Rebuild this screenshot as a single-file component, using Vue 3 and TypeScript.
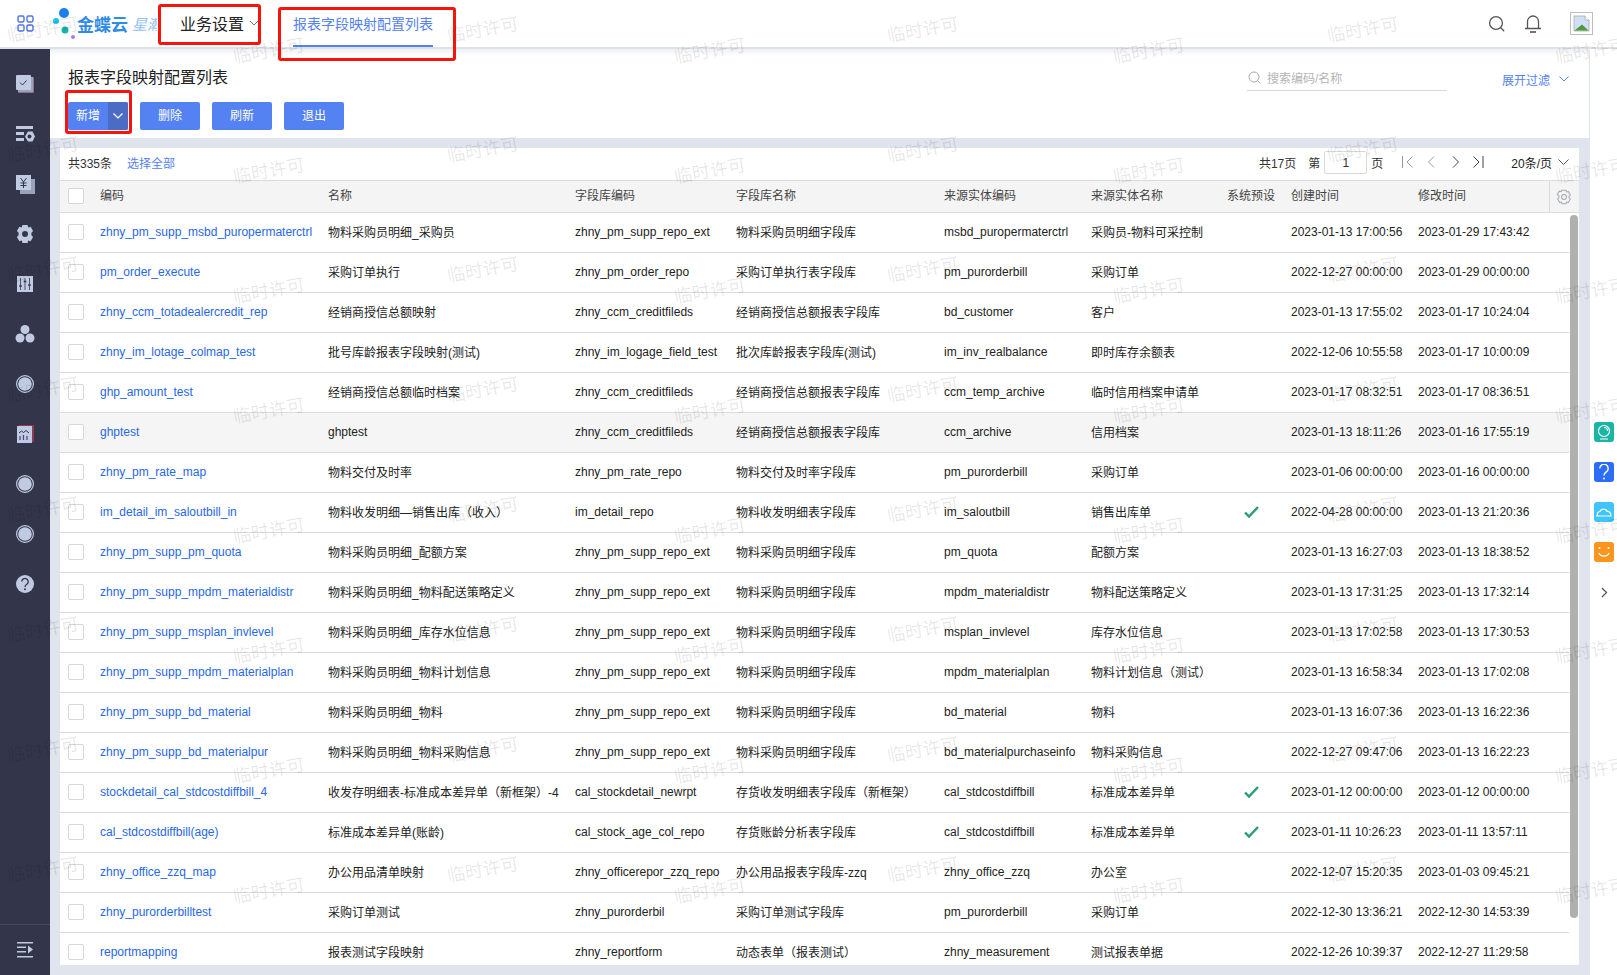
<script setup lang="ts">
interface Row {
  code: string
  name: string
  repo: string
  repoName: string
  entity: string
  entityName: string
  sys?: boolean
  created: string
  modified: string
}

const sup = 'zhny_pm_supp_repo_ext'
const supN = '物料采购员明细字段库'
const rows: Row[] = [
  { code: 'zhny_pm_supp_msbd_puropermaterctrl', name: '物料采购员明细_采购员', repo: sup, repoName: supN, entity: 'msbd_puropermaterctrl', entityName: '采购员-物料可采控制', created: '2023-01-13 17:00:56', modified: '2023-01-29 17:43:42' },
  { code: 'pm_order_execute', name: '采购订单执行', repo: 'zhny_pm_order_repo', repoName: '采购订单执行表字段库', entity: 'pm_purorderbill', entityName: '采购订单', created: '2022-12-27 00:00:00', modified: '2023-01-29 00:00:00' },
  { code: 'zhny_ccm_totadealercredit_rep', name: '经销商授信总额映射', repo: 'zhny_ccm_creditfileds', repoName: '经销商授信总额报表字段库', entity: 'bd_customer', entityName: '客户', created: '2023-01-13 17:55:02', modified: '2023-01-17 10:24:04' },
  { code: 'zhny_im_lotage_colmap_test', name: '批号库龄报表字段映射(测试)', repo: 'zhny_im_logage_field_test', repoName: '批次库龄报表字段库(测试)', entity: 'im_inv_realbalance', entityName: '即时库存余额表', created: '2022-12-06 10:55:58', modified: '2023-01-17 10:00:09' },
  { code: 'ghp_amount_test', name: '经销商授信总额临时档案', repo: 'zhny_ccm_creditfileds', repoName: '经销商授信总额报表字段库', entity: 'ccm_temp_archive', entityName: '临时信用档案申请单', created: '2023-01-17 08:32:51', modified: '2023-01-17 08:36:51' },
  { code: 'ghptest', name: 'ghptest', repo: 'zhny_ccm_creditfileds', repoName: '经销商授信总额报表字段库', entity: 'ccm_archive', entityName: '信用档案', created: '2023-01-13 18:11:26', modified: '2023-01-16 17:55:19' },
  { code: 'zhny_pm_rate_map', name: '物料交付及时率', repo: 'zhny_pm_rate_repo', repoName: '物料交付及时率字段库', entity: 'pm_purorderbill', entityName: '采购订单', created: '2023-01-06 00:00:00', modified: '2023-01-16 00:00:00' },
  { code: 'im_detail_im_saloutbill_in', name: '物料收发明细—销售出库（收入）', repo: 'im_detail_repo', repoName: '物料收发明细表字段库', entity: 'im_saloutbill', entityName: '销售出库单', sys: true, created: '2022-04-28 00:00:00', modified: '2023-01-13 21:20:36' },
  { code: 'zhny_pm_supp_pm_quota', name: '物料采购员明细_配额方案', repo: sup, repoName: supN, entity: 'pm_quota', entityName: '配额方案', created: '2023-01-13 16:27:03', modified: '2023-01-13 18:38:52' },
  { code: 'zhny_pm_supp_mpdm_materialdistr', name: '物料采购员明细_物料配送策略定义', repo: sup, repoName: supN, entity: 'mpdm_materialdistr', entityName: '物料配送策略定义', created: '2023-01-13 17:31:25', modified: '2023-01-13 17:32:14' },
  { code: 'zhny_pm_supp_msplan_invlevel', name: '物料采购员明细_库存水位信息', repo: sup, repoName: supN, entity: 'msplan_invlevel', entityName: '库存水位信息', created: '2023-01-13 17:02:58', modified: '2023-01-13 17:30:53' },
  { code: 'zhny_pm_supp_mpdm_materialplan', name: '物料采购员明细_物料计划信息', repo: sup, repoName: supN, entity: 'mpdm_materialplan', entityName: '物料计划信息（测试）', created: '2023-01-13 16:58:34', modified: '2023-01-13 17:02:08' },
  { code: 'zhny_pm_supp_bd_material', name: '物料采购员明细_物料', repo: sup, repoName: supN, entity: 'bd_material', entityName: '物料', created: '2023-01-13 16:07:36', modified: '2023-01-13 16:22:36' },
  { code: 'zhny_pm_supp_bd_materialpur', name: '物料采购员明细_物料采购信息', repo: sup, repoName: supN, entity: 'bd_materialpurchaseinfo', entityName: '物料采购信息', created: '2022-12-27 09:47:06', modified: '2023-01-13 16:22:23' },
  { code: 'stockdetail_cal_stdcostdiffbill_4', name: '收发存明细表-标准成本差异单（新框架）-4', repo: 'cal_stockdetail_newrpt', repoName: '存货收发明细表字段库（新框架）', entity: 'cal_stdcostdiffbill', entityName: '标准成本差异单', sys: true, created: '2023-01-12 00:00:00', modified: '2023-01-12 00:00:00' },
  { code: 'cal_stdcostdiffbill(age)', name: '标准成本差异单(账龄)', repo: 'cal_stock_age_col_repo', repoName: '存货账龄分析表字段库', entity: 'cal_stdcostdiffbill', entityName: '标准成本差异单', sys: true, created: '2023-01-11 10:26:23', modified: '2023-01-11 13:57:11' },
  { code: 'zhny_office_zzq_map', name: '办公用品清单映射', repo: 'zhny_officerepor_zzq_repo', repoName: '办公用品报表字段库-zzq', entity: 'zhny_office_zzq', entityName: '办公室', created: '2022-12-07 15:20:35', modified: '2023-01-03 09:45:21' },
  { code: 'zhny_purorderbilltest', name: '采购订单测试', repo: 'zhny_purorderbil', repoName: '采购订单测试字段库', entity: 'pm_purorderbill', entityName: '采购订单', created: '2022-12-30 13:36:21', modified: '2022-12-30 14:53:39' },
  { code: 'reportmapping', name: '报表测试字段映射', repo: 'zhny_reportform', repoName: '动态表单（报表测试）', entity: 'zhny_measurement', entityName: '测试报表单据', created: '2022-12-26 10:39:37', modified: '2022-12-27 11:29:58' },
]

const heads = ['编码', '名称', '字段库编码', '字段库名称', '来源实体编码', '来源实体名称', '系统预设', '创建时间', '修改时间']
const widths = [32, 228, 247, 161, 208, 147, 136, 64, 127, 139, 20, 10]

const marks: { left: string; top: string }[] = []
const xs = [7, 233, 447, 674, 887, 1113, 1327, 1555]
xs.forEach((x, i) => {
  for (let k = 0; k < 8; k++) {
    const y = (i % 2 === 0 ? 20 : 41) + 120 * k
    marks.push({ left: x + 'px', top: y + 'px' })
  }
})
</script>

<template>
  <div class="page">
    <header class="topbar">
      <svg class="apps" width="17" height="17" viewBox="0 0 17 17" fill="none" stroke="#4f73e8" stroke-width="1.4">
        <rect x="1" y="1" width="6" height="6" rx="1.4" />
        <rect x="10" y="1" width="6" height="6" rx="1.4" />
        <rect x="1" y="10" width="6" height="6" rx="1.4" />
        <rect x="10" y="10" width="6" height="6" rx="1.4" />
      </svg>
      <div class="logo">
        <svg class="dots" width="30" height="34" viewBox="0 0 30 34">
          <circle cx="13" cy="6" r="5" fill="#1b80ec" />
          <circle cx="5" cy="14" r="3" fill="#19c3ea" />
          <circle cx="14" cy="23" r="3.5" fill="#14b3a8" />
          <circle cx="22" cy="30" r="2" fill="#a57aeb" />
        </svg>
        <span class="brand">金蝶云</span>
        <span class="brand-sub">星瀚</span>
      </div>
      <div class="nav-app">
        <span>业务设置</span>
        <svg width="10" height="6" viewBox="0 0 10 6" fill="none" stroke="#777" stroke-width="1"><path d="M1 1l4 4 4-4" /></svg>
      </div>
      <div class="tab">报表字段映射配置列表</div>
      <div class="top-tools">
        <svg width="18" height="18" viewBox="0 0 18 18" fill="none" stroke="#555" stroke-width="1.3">
          <circle cx="8" cy="8" r="6.4" />
          <path d="M12.8 12.8l3.4 3.4" />
        </svg>
        <svg class="bell" width="18" height="19" viewBox="0 0 18 19" fill="none" stroke="#555" stroke-width="1.3">
          <path d="M1 14.5h16M3.5 14.5V7.5a5.500 5.500 0 0 1 11 0v7" />
          <path d="M6 18h6" stroke-width="1.6" />
        </svg>
        <div class="avatar">
          <svg width="17" height="17" viewBox="0 0 17 17">
            <path d="M1 1h11l4 4v11H1z" fill="#cfe0f7" stroke="#aaa" stroke-width=".8" />
            <path d="M1.500 15.500L9 9.500l6.500 6z" fill="#4f9a3b" />
            <path d="M12 1v4h4" fill="#fff" stroke="#aaa" stroke-width=".8" />
          </svg>
        </div>
      </div>
    </header>

    <div class="body">
      <aside class="side">
        <div class="side-list">
          <div class="side-item">
            <svg width="20" height="20" viewBox="0 0 20 20">
              <rect x="4" y="4" width="15" height="15" fill="#8d3a55" />
              <rect x="3" y="3" width="15.500" height="15.500" fill="#9aa3bd" />
              <rect x="1" y="1" width="15" height="15" rx="1" fill="#c0cbe2" />
              <path d="M5 8.500l2.500 2.500 4-4.500" fill="none" stroke="#33364a" stroke-width="1" />
            </svg>
          </div>
          <div class="side-item">
            <svg width="20" height="20" viewBox="0 0 20 20" fill="#c0cbe2">
              <rect x="1" y="2" width="17" height="3" />
              <rect x="1" y="8" width="8" height="3" />
              <rect x="1" y="14" width="8" height="3" />
              <path d="M10 12.500l3-5h4.500l2.500 5-2.500 5H13z" />
              <circle cx="14.500" cy="12.500" r="2" fill="#33364a" />
            </svg>
          </div>
          <div class="side-item">
            <svg width="20" height="20" viewBox="0 0 20 20">
              <rect x="5" y="5" width="15" height="15" fill="#9aa3bd" />
              <rect x="1" y="1" width="15" height="15" fill="#c0cbe2" />
              <path d="M5.500 4l3 4 3-4M8.500 8v6M5.500 9h6M5.500 11.500h6" fill="none" stroke="#33364a" stroke-width="1" />
            </svg>
          </div>
          <div class="side-item">
            <svg width="20" height="20" viewBox="0 0 20 20">
              <path d="M7.500 1h5l.8 2.400 2.300-.6 2.500 4.300-1.700 1.700v2.400l1.700 1.700-2.500 4.300-2.300-.6-.8 2.400h-5l-.8-2.400-2.300.6L1.900 12.900l1.700-1.700V8.800L1.900 7.100l2.500-4.300 2.300.6z" fill="#c0cbe2" />
              <circle cx="10" cy="10" r="3" fill="#33364a" />
            </svg>
          </div>
          <div class="side-item">
            <svg width="20" height="20" viewBox="0 0 20 20">
              <rect x="2" y="2" width="16" height="16" fill="#c0cbe2" />
              <path d="M5.500 4v12M10 4v12M14.500 4v12" stroke="#33364a" stroke-width=".8" />
              <path d="M4.200 12h2.600M8.700 7.500h2.600M13.200 11h2.600" stroke="#33364a" stroke-width="1.600" />
            </svg>
          </div>
          <div class="side-item">
            <svg width="20" height="20" viewBox="0 0 20 20" fill="#c0cbe2">
              <circle cx="10" cy="5.500" r="4.500" />
              <circle cx="5" cy="14" r="4.500" />
              <circle cx="15" cy="14" r="4.500" />
            </svg>
          </div>
          <div class="side-item">
            <svg width="20" height="20" viewBox="0 0 20 20">
              <circle cx="10" cy="10" r="8.400" fill="#33364a" stroke="#c0cbe2" stroke-width="1.200" />
              <circle cx="10" cy="10" r="6.800" fill="#c0cbe2" />
            </svg>
          </div>
          <div class="side-item">
            <svg width="20" height="20" viewBox="0 0 20 20">
              <rect x="4" y="1" width="15" height="17" fill="#8d3a55" />
              <rect x="2" y="2" width="15" height="17" fill="#c0cbe2" />
              <path d="M4 9l2.500-2 2 1.500 2.500-2 3 2.500" fill="none" stroke="#33364a" stroke-width="1" />
              <path d="M5 16v-4M8.500 16v-5M12 16v-4" stroke="#5a3a80" stroke-width="1.200" />
            </svg>
          </div>
          <div class="side-item">
            <svg width="20" height="20" viewBox="0 0 20 20">
              <circle cx="10" cy="10" r="8.400" fill="#33364a" stroke="#c0cbe2" stroke-width="1.200" />
              <circle cx="10" cy="10" r="6.800" fill="#c0cbe2" />
            </svg>
          </div>
          <div class="side-item">
            <svg width="20" height="20" viewBox="0 0 20 20">
              <circle cx="10" cy="10" r="8.400" fill="#33364a" stroke="#c0cbe2" stroke-width="1.200" />
              <circle cx="10" cy="10" r="6.800" fill="#c0cbe2" />
            </svg>
          </div>
          <div class="side-item">
            <svg width="20" height="20" viewBox="0 0 20 20">
              <circle cx="10" cy="10" r="9" fill="#c0cbe2" />
              <path d="M6.800 7.600a3.200 3.200 0 1 1 5 2.700c-1.200.8-1.800 1.400-1.800 2.700" fill="none" stroke="#33364a" stroke-width="1.300" />
              <circle cx="10" cy="15.300" r="1" fill="#33364a" />
            </svg>
          </div>
        </div>
        <div class="side-foot">
          <svg width="17" height="16" viewBox="0 0 17 16" fill="#c0cbe2">
            <rect x="0" y="0" width="16" height="1.500" />
            <rect x="0" y="4.500" width="9" height="1.500" />
            <rect x="0" y="9" width="9" height="1.500" />
            <rect x="0" y="14" width="16" height="1.500" />
            <path d="M11 3.500l5 4-5 4z" />
          </svg>
        </div>
      </aside>

      <main class="main">
        <section class="head-panel">
          <div class="title-row">
            <h1>报表字段映射配置列表</h1>
            <div class="search">
              <svg width="13" height="13" viewBox="0 0 13 13" fill="none" stroke="#aaa" stroke-width="1">
                <circle cx="6" cy="6" r="5" />
                <path d="M9.700 9.700l2.800 2.800" />
              </svg>
              <span>搜索编码/名称</span>
            </div>
            <div class="expand">
              <span>展开过滤</span>
              <svg width="10" height="6" viewBox="0 0 10 6" fill="none" stroke="#5582f3" stroke-width="1"><path d="M.5.500L5 5 9.500.5" /></svg>
            </div>
          </div>
          <div class="btn-row">
            <div class="split">
              <span class="split-main">新增</span>
              <span class="split-arrow">
                <svg width="10" height="6" viewBox="0 0 10 6" fill="none" stroke="#fff" stroke-width="1.200"><path d="M.5.500L5 5 9.500.5" /></svg>
              </span>
            </div>
            <button class="btn">删除</button>
            <button class="btn">刷新</button>
            <button class="btn">退出</button>
          </div>
        </section>

        <section class="panel">
          <div class="toolbar">
            <span>共335条</span>
            <a class="select-all">选择全部</a>
            <div class="pager">
              <span>共17页</span>
              <span class="p-di">第</span>
              <span class="p-input">1</span>
              <span class="p-ye">页</span>
              <svg class="p-first" width="12" height="12" viewBox="0 0 12 12" fill="none" stroke="#999" stroke-width="1"><path d="M.5 0v12M10.500.5L5 6l5.500 5.500" /></svg>
              <svg class="p-prev" width="8" height="12" viewBox="0 0 8 12" fill="none" stroke="#999" stroke-width="1"><path d="M7 .5L1.500 6 7 11.500" /></svg>
              <svg class="p-next" width="8" height="12" viewBox="0 0 8 12" fill="none" stroke="#444" stroke-width="1"><path d="M1 .5L6.500 6 1 11.500" /></svg>
              <svg class="p-last" width="12" height="12" viewBox="0 0 12 12" fill="none" stroke="#444" stroke-width="1"><path d="M11 0v12M1.500.5L7 6l-5.500 5.500" /></svg>
              <span class="p-size">20条/页</span>
              <svg class="p-chev" width="11" height="7" viewBox="0 0 11 7" fill="none" stroke="#555" stroke-width="1"><path d="M.5.500l5 5 5-5" /></svg>
            </div>
          </div>
          <div class="table-wrap">
            <table class="grid">
              <colgroup>
                <col v-for="(w, i) in widths" :key="i" :style="{ width: w + 'px' }" />
              </colgroup>
              <thead>
                <tr>
                  <th class="c-check"><span class="box"></span></th>
                  <th v-for="h in heads" :key="h">{{ h }}</th>
                  <th class="c-gear" colspan="2">
                    <svg width="16" height="16" viewBox="0 0 20 20" fill="none" stroke="#a3a8b2" stroke-width="1.300">
                      <path d="M7.500 1.500h5l.7 2.200 2.200-.5 2.500 4.300-1.600 1.700v1.600l1.600 1.700-2.500 4.300-2.200-.5-.7 2.200h-5l-.7-2.200-2.200.5-2.500-4.300 1.600-1.700V8.700L1.600 7l2.500-4.300 2.200.5z" />
                      <circle cx="10" cy="10" r="3" />
                    </svg>
                  </th>
                </tr>
              </thead>
              <tbody>
                <tr v-for="(r, i) in rows" :key="r.code" :class="{ hover: i === 5 }">
                  <td class="c-check"><span class="box"></span></td>
                  <td class="link">{{ r.code }}</td>
                  <td>{{ r.name }}</td>
                  <td>{{ r.repo }}</td>
                  <td>{{ r.repoName }}</td>
                  <td>{{ r.entity }}</td>
                  <td>{{ r.entityName }}</td>
                  <td class="c-sys">
                    <svg v-if="r.sys" width="15" height="12" viewBox="0 0 15 12" fill="none" stroke="#23a06e" stroke-width="2.400"><path d="M1 6.500l4 4 9-9.500" /></svg>
                  </td>
                  <td>{{ r.created }}</td>
                  <td>{{ r.modified }}</td>
                  <td></td>
                  <td class="c-gutter"></td>
                </tr>
              </tbody>
            </table>
            <div class="scrollbar"></div>
          </div>
        </section>
      </main>

      <aside class="rail">
        <div class="rail-btn teal">
          <svg width="16" height="16" viewBox="0 0 16 16" fill="none" stroke="#fff" stroke-width="1.200">
            <circle cx="8" cy="7" r="5.500" />
            <path d="M8 3.500A3.500 3.500 0 0 1 11.500 7M4 15h8" />
          </svg>
        </div>
        <div class="rail-btn blue">
          <svg width="12" height="16" viewBox="0 0 12 16" fill="none" stroke="#fff" stroke-width="1.400">
            <path d="M1.800 4.500a4.200 4.200 0 1 1 6.500 3.400C6.800 9 6 9.700 6 11.500" />
            <circle cx="6" cy="14.500" r=".9" fill="#fff" stroke="none" />
          </svg>
        </div>
        <div class="rail-btn sky">
          <svg width="16" height="10" viewBox="0 0 16 10" fill="none" stroke="#fff" stroke-width="1.200">
            <path d="M0 9h15.500M2 9C.5 7 1.500 4.500 4 4.500 5 1.500 10 1 11 4.500c2.500-.3 4.500 2 3.500 4.500" />
          </svg>
        </div>
        <div class="rail-btn orange">
          <svg width="14" height="12" viewBox="0 0 14 12" fill="none" stroke="#fff" stroke-width="1.300">
            <circle cx="2.500" cy="2" r="1" fill="#fff" stroke="none" />
            <circle cx="11.500" cy="2" r="1" fill="#fff" stroke="none" />
            <path d="M2 7c1.500 4 8.500 4 10 0" />
          </svg>
        </div>
        <svg class="rail-chev" width="7" height="11" viewBox="0 0 7 11" fill="none" stroke="#555" stroke-width="1.300"><path d="M1 1l4.500 4.500L1 10" /></svg>
      </aside>
    </div>

    <div class="ring ring-a"></div>
    <div class="ring ring-b"></div>
    <div class="ring ring-c"></div>

    <div class="marks">
      <span v-for="(m, i) in marks" :key="i" class="mark" :style="m">临时许可</span>
    </div>
  </div>
</template>

<style scoped>
.page {
  position: relative;
  width: 1617px;
  height: 975px;
  overflow: hidden;
  display: flex;
  flex-direction: column;
  background: #fff;
  color: #212121;
  font-family: "Liberation Sans", "Noto Sans CJK SC", sans-serif;
  font-size: 12px;
}
.topbar {
  height: 49px;
  flex: none;
  display: flex;
  align-items: center;
  box-sizing: border-box;
  border-bottom: 2px solid #dde1e9;
  background: #fff;
}
.apps { margin-left: 17px; flex: none; }
.logo {
  width: 106px;
  margin-left: 17px;
  display: flex;
  align-items: center;
  overflow: hidden;
  white-space: nowrap;
  flex: none;
  height: 47px;
}
.dots { flex: none; margin-right: -4px; margin-top: 1px; }
.brand { font-size: 17px; font-weight: 700; color: #2f8be6; width: 52px; flex: none; }
.brand-sub { font-size: 15px; font-style: italic; color: #93c1f0; margin-left: 3px; flex: none; }
.nav-app {
  margin-left: 23px;
  display: flex;
  align-items: center;
  gap: 5px;
  font-size: 16px;
  color: #212121;
  flex: none;
  padding-bottom: 2px;
}
.tab {
  margin-left: 34px;
  width: 140px;
  height: 47px;
  line-height: 48px;
  box-sizing: border-box;
  border-bottom: 2px solid #5582f3;
  color: #5582f3;
  font-size: 14px;
  text-align: center;
  white-space: nowrap;
  flex: none;
}
.top-tools { margin-left: auto; display: flex; align-items: center; margin-right: 24px; }
.bell { margin-left: 18px; }
.avatar {
  margin-left: 28px;
  width: 23px;
  height: 23px;
  border: 1px solid #bdbdbd;
  box-sizing: border-box;
  display: flex;
  align-items: center;
  justify-content: center;
}
.body { flex: 1; min-height: 0; display: flex; }
.side {
  width: 50px;
  flex: none;
  background: #33364a;
  display: flex;
  flex-direction: column;
}
.side-list { flex: 1; padding-top: 10px; }
.side-item { height: 50px; display: flex; align-items: center; justify-content: center; }
.side-foot {
  height: 51px;
  box-sizing: border-box;
  border-top: 1px solid #45485b;
  display: flex;
  align-items: center;
  justify-content: center;
}
.main {
  width: 1540px;
  flex: none;
  background: #e0e4ed;
  display: flex;
  flex-direction: column;
}
.head-panel {
  height: 89px;
  flex: none;
  box-sizing: border-box;
  background: linear-gradient(#eef0f3, #fff 7px);
  border-right: 1px solid #e0e4ed;
  padding: 17px 20px 0 18px;
}
.title-row { display: flex; align-items: flex-start; height: 36px; }
h1 { margin: 0; font-size: 16px; font-weight: 400; line-height: 24px; color: #212121; }
.search {
  margin-left: auto;
  margin-right: 55px;
  width: 200px;
  height: 25px;
  box-sizing: border-box;
  border-bottom: 1px solid #d9d9d9;
  display: flex;
  align-items: center;
  gap: 6px;
  color: #b5b5b5;
  padding-left: 1px;
  padding-bottom: 1px;
}
.expand {
  display: flex;
  align-items: center;
  gap: 9px;
  color: #5582f3;
  height: 26px;
}
.btn-row { display: flex; gap: 12px; }
.split {
  width: 60px;
  height: 28px;
  display: flex;
  background: #5582f3;
  border-radius: 2px;
  overflow: hidden;
  color: #fff;
}
.split-main { width: 40px; line-height: 28px; text-align: center; }
.split-arrow { width: 20px; background: #4a6cc4; display: flex; align-items: center; justify-content: center; }
.btn {
  width: 60px;
  height: 28px;
  padding: 0 0 3px;
  border: 0;
  border-radius: 2px;
  background: #5582f3;
  color: #fff;
  font: inherit;
}
.panel {
  margin: 10px 11px 10px 10px;
  flex: 1;
  min-height: 0;
  background: #fff;
  display: flex;
  flex-direction: column;
  overflow: hidden;
}
.toolbar {
  height: 32px;
  flex: none;
  display: flex;
  align-items: center;
  box-sizing: border-box;
  padding: 0 0 4px 8px;
  color: #333;
}
.select-all { margin-left: 15px; color: #5582f3; }
.pager { margin-left: auto; display: flex; align-items: center; }
.p-di { margin-left: 12px; }
.p-input {
  margin-left: 4px;
  width: 43px;
  height: 23px;
  line-height: 23px;
  box-sizing: border-box;
  border: 1px solid #d9d9d9;
  border-radius: 2px;
  text-align: center;
}
.p-ye { margin-left: 4px; }
.p-first { margin-left: 19px; }
.p-prev { margin-left: 13px; }
.p-next { margin-left: 17px; }
.p-last { margin-left: 12px; }
.p-size { margin-left: 27px; color: #212121; }
.p-chev { margin-left: 6px; margin-right: 10px; }
.table-wrap { position: relative; flex: 1; min-height: 0; overflow: hidden; }
.grid {
  table-layout: fixed;
  width: 1519px;
  border-collapse: separate;
  border-spacing: 0;
}
th, td {
  box-sizing: border-box;
  padding: 0 0 0 8px;
  overflow: hidden;
  white-space: nowrap;
  text-align: left;
  font-weight: 400;
}
th {
  height: 33px;
  background: #f4f4f4;
  border-top: 1px solid #dcdcdc;
  border-bottom: 1px solid #dcdcdc;
  color: #444;
  padding-bottom: 5px;
}
th.c-check { padding-bottom: 1px; }
td {
  height: 40px;
  border-bottom: 1px solid #dcdcdc;
  padding-bottom: 2px;
}
tr.hover td { background: #f5f5f5; }
tr.hover td.c-gutter { background: #fff; }
td.c-gutter { border-bottom: 0; padding: 0; }
.link { color: #2767e8; }
.box {
  display: block;
  width: 16px;
  height: 16px;
  box-sizing: border-box;
  border: 1px solid #d6d6d6;
  border-radius: 2px;
  background: #fff;
}
.c-sys { padding: 2px 0 0; text-align: center; }
th.c-gear { padding: 0; border-left: 1px solid #dcdcdc; text-align: center; }
.c-gear svg { display: inline-block; vertical-align: middle; margin-right: 2px; }
.scrollbar {
  position: absolute;
  right: 1px;
  top: 35px;
  width: 8px;
  height: 703px;
  background: #b0b0b0;
  border-radius: 4px;
}
.rail {
  flex: 1;
  display: flex;
  flex-direction: column;
  align-items: center;
  padding-top: 373px;
  padding-left: 1px;
  background: #fff;
}
.rail-btn {
  width: 20px;
  height: 20px;
  border-radius: 3px;
  display: flex;
  align-items: center;
  justify-content: center;
  margin-bottom: 20px;
  flex: none;
}
.teal { background: #1cb5a5; }
.blue { background: #2b6ef5; }
.sky { background: #3ec5fb; }
.orange { background: #fb951c; }
.rail-chev { margin-top: 5px; }
.ring {
  position: absolute;
  box-sizing: border-box;
  border: 3px solid #f5150d;
  border-radius: 3px;
  pointer-events: none;
}
.ring-a { left: 158px; top: 4px; width: 103px; height: 41px; }
.ring-b { left: 278px; top: 7px; width: 178px; height: 54px; }
.ring-c { left: 65px; top: 90px; width: 67px; height: 44px; }
.marks { position: absolute; inset: 0; pointer-events: none; }
.mark {
  position: absolute;
  font-size: 18px;
  color: rgba(0, 0, 0, 0.1);
  transform: rotate(-10deg);
  white-space: nowrap;
  line-height: 20px;
}
</style>

<style>
html, body { margin: 0; background: #fff; }
</style>
